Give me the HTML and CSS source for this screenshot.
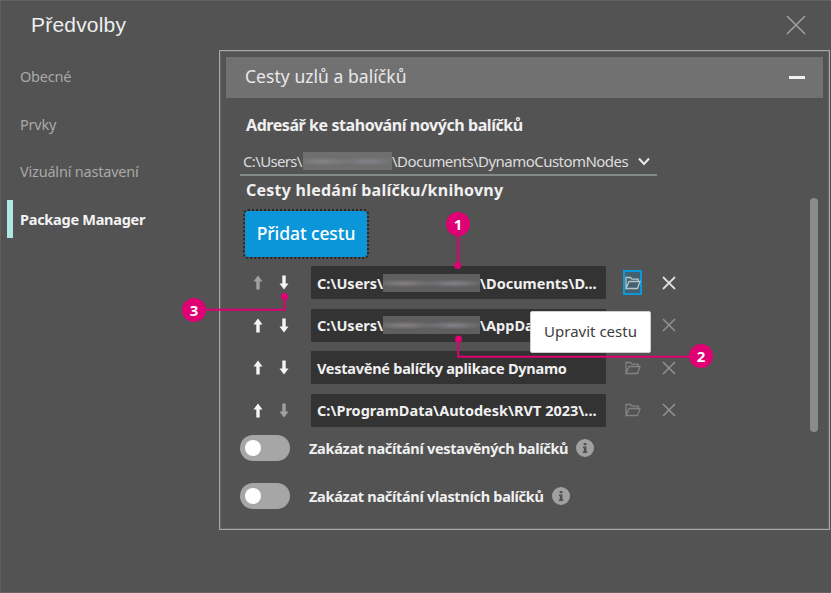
FILE: index.html
```html
<!DOCTYPE html>
<html lang="cs">
<head>
<meta charset="utf-8">
<title>Předvolby</title>
<link rel="stylesheet" href="styles.css">
</head>
<body>
<svg class="defs" aria-hidden="true">
  <symbol id="up" viewBox="0 0 10 15"><path d="M5 .5 9.500 6.500H6.700V14.500H3.300V6.500H.5Z"/></symbol>
  <symbol id="down" viewBox="0 0 10 15"><path d="M5 14.500 9.500 8.500H6.700V.5H3.300V8.500H.5Z"/></symbol>
  <symbol id="folder" viewBox="0 0 16 14"><path d="M1 12.500V1.500H5.500L7 3.200H13.200V5.500M1 12.500 4 5.500H15L12.500 12.500Z"/></symbol>
  <symbol id="cross" viewBox="0 0 14 14"><path d="M1 1 13 13M13 1 1 13"/></symbol>
</svg>
<main class="window">
  <header class="titlebar">
    <h1 class="title">Předvolby</h1>
    <svg class="close" viewBox="0 0 20 20"><path d="M1 1 19 19M19 1 1 19"/></svg>
  </header>
  <div class="content">
    <nav class="tabs">
      <span class="tab">Obecné</span>
      <span class="tab">Prvky</span>
      <span class="tab">Vizuální nastavení</span>
      <span class="tab active">Package Manager</span>
    </nav>
    <section class="panel">
      <div class="expander"><span class="expander-title">Cesty uzlů a balíčků</span><span class="minus"></span></div>
      <div class="body">
        <h2 class="heading h-dir">Adresář ke stahování nových balíčků</h2>
        <div class="select"><span class="u">C:\Users\</span><i class="redacted"></i><span class="d">\Documents\DynamoCustomNodes</span><svg class="chevron" viewBox="0 0 12 9"><path d="M1 1.500 6 7 11 1.500"/></svg></div>
        <h2 class="heading h-search">Cesty hledání balíčku/knihovny</h2>
        <button class="add">Přidat cestu</button>
        <div class="paths">
          <div class="row">
            <svg class="arrow off"><use href="#up"/></svg><svg class="arrow"><use href="#down"/></svg>
            <div class="path"><span class="u">C:\Users\</span><i class="redacted"></i><span class="p1">\Documents\D...</span></div>
            <span class="edit focus"><svg class="folder"><use href="#folder"/></svg></span><svg class="remove on"><use href="#cross"/></svg>
          </div>
          <div class="row">
            <svg class="arrow"><use href="#up"/></svg><svg class="arrow"><use href="#down"/></svg>
            <div class="path"><span class="u">C:\Users\</span><i class="redacted"></i><span class="p2">\AppData</span></div>
            <span class="edit"><svg class="folder"><use href="#folder"/></svg></span><svg class="remove"><use href="#cross"/></svg>
          </div>
          <div class="row">
            <svg class="arrow"><use href="#up"/></svg><svg class="arrow"><use href="#down"/></svg>
            <div class="path"><span class="p3">Vestavěné balíčky aplikace Dynamo</span></div>
            <span class="edit"><svg class="folder"><use href="#folder"/></svg></span><svg class="remove"><use href="#cross"/></svg>
          </div>
          <div class="row">
            <svg class="arrow"><use href="#up"/></svg><svg class="arrow off"><use href="#down"/></svg>
            <div class="path"><span class="p4">C:\ProgramData\Autodesk\RVT 2023\...</span></div>
            <span class="edit"><svg class="folder"><use href="#folder"/></svg></span><svg class="remove"><use href="#cross"/></svg>
          </div>
        </div>
        <div class="option"><span class="toggle"></span><span class="label">Zakázat načítání vestavěných balíčků</span><svg class="info" viewBox="0 0 18 18"><circle cx="9" cy="9" r="9"/><path d="M7.700 4h2.800v2.200h-2.800zM7 7.500h3.500v5H11.300V14H6.800V12.500H7.800V9H7z"/></svg></div>
        <div class="option"><span class="toggle"></span><span class="label">Zakázat načítání vlastních balíčků</span><svg class="info" viewBox="0 0 18 18"><circle cx="9" cy="9" r="9"/><path d="M7.700 4h2.800v2.200h-2.800zM7 7.500h3.500v5H11.300V14H6.800V12.500H7.800V9H7z"/></svg></div>
      </div>
      <div class="scrollbar"></div>
    </section>
  </div>
  <div class="tooltip">Upravit cestu</div>
  <svg class="leaders" viewBox="0 0 831 593"><path d="M458.200 224V266M194 309.800H284.500V296.500M458.200 339V356.700H700"/><circle cx="457.700" cy="265.500" r="3.500"/><circle cx="284.500" cy="296.500" r="3.500"/><circle cx="458.500" cy="339" r="3.500"/></svg>
  <span class="badge b1">1</span><span class="badge b2">2</span><span class="badge b3">3</span>
</main>
</body>
</html>
```
FILE: styles.css
```css
* { box-sizing: border-box; }
body { margin: 0; background: #535353; font-family: "Noto Sans", sans-serif; font-size: 15px; color: #f0f0f0; }
h1, h2 { margin: 0; }
.defs { position: absolute; width: 0; height: 0; }
.window { position: relative; width: 831px; height: 593px; overflow: hidden; border-top: 1px solid #636363; border-left: 1px solid #606060; border-bottom: 1px solid #636363; }
.titlebar { display: flex; justify-content: space-between; align-items: center; height: 49px; padding: 0 25px 1px 30px; }
.title { font: 400 21px/30px "Liberation Sans", sans-serif; color: #eee; letter-spacing: 0.2px; }
.close { width: 20px; height: 20px; fill: none; stroke: #a2a2a2; stroke-width: 1.500; }
.content { display: flex; }
.tabs { width: 218px; padding: 7px 0 0 6px; display: flex; flex-direction: column; gap: 9.500px; }
.tab { height: 38px; line-height: 38px; padding-left: 7px; border-left: 6px solid transparent; color: #a9a9a9; white-space: nowrap; font-size: 14.500px; letter-spacing: -0.2px; }
.tab.active { border-color: #ade9e0; color: #f4f4f4; font-weight: 700; letter-spacing: -0.27px; }
.panel { position: relative; width: 611px; height: 480px; border: 1px solid #a8a8a8; box-shadow: inset 0 0 0 1px #646464; padding: 6px; }
.expander { height: 41px; background: #717171; display: flex; align-items: center; justify-content: space-between; padding: 0 18px 3px 19px; font-size: 17.500px; }
.expander-title { color: #e8e8e8; letter-spacing: 0.05px; }
.minus { width: 16px; height: 3px; margin-top: 2px; background: #f0f0f0; }
.body { padding-left: 14px; }
.heading { font-size: 16px; line-height: 24px; padding-left: 6px; white-space: nowrap; }
.h-dir { margin-top: 15px; letter-spacing: -0.43px; }
.select { display: flex; align-items: center; width: 417px; height: 28px; margin-top: 11px; padding: 0 0 0 3px; border-bottom: 2px solid #858a8d; white-space: nowrap; color: #ddd; }
.redacted { flex: none; width: 89px; height: 18px; background: radial-gradient(ellipse at 22% 52%, #858585 0, #85858500 32%), radial-gradient(ellipse at 73% 52%, #82838a 0, #82838a00 32%), #6f6f6f; filter: blur(0.6px); }
.path .redacted { background: radial-gradient(ellipse at 22% 52%, #858080 0, #85808000 32%), radial-gradient(ellipse at 73% 52%, #82838a 0, #82838a00 32%), #5f5f5f; }
.select .u { width: 60px; letter-spacing: -0.65px; }
.select .d { letter-spacing: -0.54px; }
.chevron { flex: none; width: 12px; height: 9px; margin-left: 10px; fill: none; stroke: #e8e8e8; stroke-width: 2; }
.h-search { margin-top: 2px; letter-spacing: 0.24px; }
.add { display: block; width: 122px; height: 46px; margin: 9px 0 0 5px; padding: 0 0 3px; border: 0; border-radius: 3px; background: #0a96d9; outline: 2px dotted #292929; color: #fff; font: 500 17.500px "Noto Sans", sans-serif; letter-spacing: -0.1px; white-space: nowrap; }
.paths { display: flex; flex-direction: column; gap: 9.500px; margin-top: 9px; }
.row { display: flex; align-items: center; height: 33px; padding-left: 13px; }
.arrow { width: 10px; height: 15px; margin-right: 16px; fill: #f5f5f5; flex: none; }
.arrow.off { fill: #a0a0a0; }
.arrow + .arrow { margin-right: 22px; }
.path { width: 295px; height: 33px; background: #333; display: flex; align-items: center; padding-left: 6px; overflow: hidden; white-space: nowrap; font-weight: 700; font-size: 14.500px; flex: none; }
.path .u { width: 66px; flex: none; }
.path .redacted { width: 97px; }
.p3 { letter-spacing: -0.26px; }
.edit { display: flex; align-items: center; justify-content: center; width: 19px; height: 25px; margin-left: 17px; border: 2px solid transparent; }
.edit.focus { border-color: #0c99dc; background: #426171; }
.folder { width: 16px; height: 14px; flex: none; fill: none; stroke: #828282; stroke-width: 1.300; }
.focus .folder { stroke: #bac3c7; }
.remove { width: 14px; height: 14px; margin-left: 20px; fill: none; stroke: #929292; stroke-width: 1.500; }
.remove.on { stroke: #ddd; stroke-width: 1.800; }
.option { display: flex; align-items: center; height: 26px; margin-top: 8px; font-weight: 700; }
.option + .option { margin-top: 22px; }
.toggle { width: 50px; height: 26px; border-radius: 13px; background: #a6a6a6; padding: 5px; }
.toggle::before { content: ""; display: block; width: 16px; height: 16px; border-radius: 50%; background: #fff; }
.label { margin-left: 19px; white-space: nowrap; font-size: 14.500px; letter-spacing: -0.3px; }
.info { width: 18px; height: 18px; margin-left: 8px; fill: #a0a0a0; }
.info path { fill: #505050; }
.scrollbar { position: absolute; left: 590px; top: 147px; width: 8px; height: 234px; border-radius: 4px; background: #8b8b8b; }
.tooltip { position: absolute; left: 529px; top: 310px; width: 121px; height: 42px; padding-bottom: 2px; border-radius: 2px; background: #fff; border: 1px solid #ccc; color: #3c3c3c; display: flex; align-items: center; justify-content: center; white-space: nowrap; font-size: 15px; }
.leaders { position: absolute; left: -1px; top: -1px; width: 831px; height: 593px; fill: #df0074; }
.leaders path { fill: none; stroke: #df0074; stroke-width: 2; }
.badge { position: absolute; width: 24px; height: 24px; border-radius: 50%; background: #df0074; color: #fff; font: 700 15px/24px "Noto Sans", sans-serif; text-align: center; }
.b1 { left: 445px; top: 211px; }
.b2 { left: 688px; top: 343px; }
.b3 { left: 181px; top: 297px; }
```
